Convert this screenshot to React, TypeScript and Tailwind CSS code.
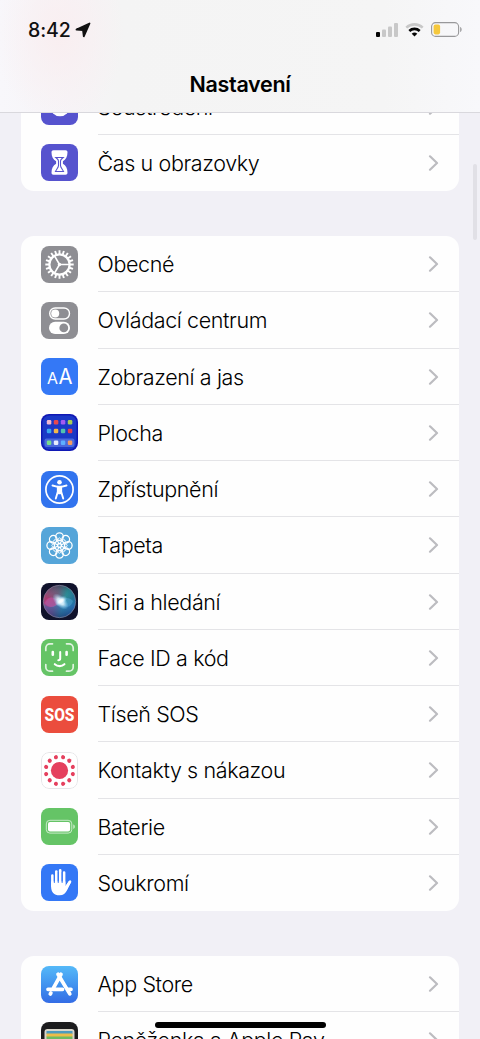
import type { ReactNode } from "react";

type Item = {
  label: string;
  icon: ReactNode;
  bg: string;
};

const ring = (n: number) => Array.from({ length: n }, (_, i) => (i * 360) / n);

function Glyph({ children }: { children: ReactNode }) {
  return (
    <svg viewBox="0 0 37 37" className="block size-full" fill="none" stroke="none">
      {children}
    </svg>
  );
}

function FocusIcon() {
  return (
    <Glyph>
      <circle cx="19" cy="18.5" r="9.8" fill="#fff" />
      <circle cx="20" cy="16.5" r="7.200" fill="#5653ce" />
    </Glyph>
  );
}

function HourglassIcon() {
  return (
    <Glyph>
      <path
        d="M12.500 6.200h12c1.300 0 2 .8 2 2 0 4.500-1.600 7.200-4.600 9.100v2.400c3 1.900 4.600 4.600 4.600 9.100 0 1.200-.7 2-2 2h-12c-1.300 0-2-.8-2-2 0-4.500 1.600-7.200 4.600-9.100v-2.400c-3-1.900-4.600-4.600-4.600-9.100 0-1.200.7-2 2-2z"
        fill="#fff"
      />
      <path
        d="M14.800 13.500c1.400 1.200 2.700 2 2.700 3.500v4.500c0 2-1.800 3.500-3 6h8c-1.200-2.500-3-4-3-6V17c0-1.500 1.300-2.300 2.700-3.500z"
        stroke="#5653ce"
        strokeWidth="1.100"
      />
    </Glyph>
  );
}

function GearIcon() {
  return (
    <Glyph>
      <g stroke="#fff">
        {ring(20).map((a) => (
          <path key={a} d="M18.500 4.300v3.700" strokeWidth="1.900" transform={`rotate(${a} 18.5 18.5)`} />
        ))}
        <circle cx="18.5" cy="18.5" r="10.100" strokeWidth="2.200" />
        <path d="M18.500 18.500h10M18.500 18.500l-5-8.700M18.500 18.500l-5 8.700" strokeWidth="1.600" />
      </g>
      <circle cx="18.5" cy="18.5" r="1.700" fill="#fff" />
    </Glyph>
  );
}

function TogglesIcon() {
  return (
    <Glyph>
      <rect x="8.700" y="6" width="19.800" height="11" rx="5.500" stroke="#fff" strokeWidth="1.400" />
      <circle cx="14.200" cy="11.500" r="4" fill="#fff" />
      <rect x="8" y="19.800" width="21" height="12.200" rx="6.100" fill="#fff" />
      <circle cx="22.800" cy="25.900" r="4.400" fill="#8e8e93" />
    </Glyph>
  );
}

function TextSizeIcon() {
  return (
    <Glyph>
      <g fill="#fff" fontFamily="Inter, sans-serif">
        <text x="6" y="26" fontSize="16" fontWeight="400" textLength="11" lengthAdjust="spacingAndGlyphs">
          A
        </text>
        <text x="17.500" y="26" fontSize="21.500" fontWeight="400" textLength="14" lengthAdjust="spacingAndGlyphs">
          A
        </text>
      </g>
    </Glyph>
  );
}

const appDots = [
  ["#f0b8d0", "#e5484f", "#a45af0", "#a9ce55"],
  ["#39a5ee", "#f3b649", "#52c3ae", "#e33d4c"],
  ["#78dc8c", "#e8ecff", "#5daeff", "#f49b62"],
];

function HomeScreenIcon() {
  return (
    <Glyph>
      <rect x="1.500" y="1.500" width="34" height="34" rx="7" fill="#1b38c6" />
      <rect x="3.500" y="24.500" width="30" height="8.500" rx="2" fill="#4a68dc" />
      {appDots.map((row, y) =>
        row.map((color, x) => (
          <rect
            key={color}
            x={5.800 + x * 7}
            y={[6, 14.800, 26.500][y]}
            width="4.500"
            height="4.500"
            rx="1.200"
            fill={color}
          />
        ))
      )}
    </Glyph>
  );
}

function AccessibilityIcon() {
  return (
    <Glyph>
      <circle cx="18.5" cy="18.5" r="13.600" stroke="#fff" strokeWidth="1.700" />
      <circle cx="18.5" cy="11.200" r="2.300" fill="#fff" />
      <path
        d="M11.500 14.500l5.300 1.300v5l-2 6.800M25.500 14.500l-5.300 1.300v5l2 6.800"
        stroke="#fff"
        strokeWidth="1.900"
        strokeLinecap="round"
        strokeLinejoin="round"
      />
      <path d="M16 14.800h5v6.400l-1.200 2h-2.600l-1.200-2z" fill="#fff" />
    </Glyph>
  );
}

function FlowerIcon() {
  return (
    <Glyph>
      <g stroke="#fff" strokeWidth="1.300">
        {ring(8).map((a) => (
          <circle key={a} cx="18.500" cy="9.700" r="3.800" transform={`rotate(${a} 18.5 18.5)`} />
        ))}
        {ring(8).map((a) => (
          <ellipse key={a} cx="18.500" cy="13.800" rx="1.700" ry="3" strokeWidth=".9" transform={`rotate(${a} 18.5 18.5)`} />
        ))}
        <circle cx="18.5" cy="18.5" r="2" />
      </g>
    </Glyph>
  );
}

function SiriIcon() {
  return (
    <Glyph>
      <defs>
        <linearGradient id="siri-orb" x1="0" y1="0.300" x2="1" y2="0.600">
          <stop offset="0" stopColor="#c32461" />
          <stop offset=".4" stopColor="#85486f" />
          <stop offset=".65" stopColor="#2d8490" />
          <stop offset="1" stopColor="#1b5a94" />
        </linearGradient>
        <linearGradient id="siri-shade" x1="0" y1="0" x2="0" y2="1">
          <stop offset="0" stopColor="#17505a" stopOpacity=".6" />
          <stop offset=".4" stopColor="#37bfc0" stopOpacity=".1" />
          <stop offset=".65" stopColor="#2d78c8" stopOpacity=".5" />
          <stop offset="1" stopColor="#1c2a70" stopOpacity=".6" />
        </linearGradient>
        <radialGradient id="siri-glow">
          <stop offset="0" stopColor="#fff" />
          <stop offset=".35" stopColor="#f0faff" stopOpacity=".9" />
          <stop offset="1" stopColor="#86d5ff" stopOpacity="0" />
        </radialGradient>
      </defs>
      <circle cx="18.5" cy="18.5" r="16.200" fill="url(#siri-orb)" />
      <circle cx="18.5" cy="18.5" r="16.200" fill="url(#siri-shade)" stroke="#8b87a2" strokeOpacity=".6" />
      <path d="M4 20c4-8 10-6 15-1 4-5 9-5 13-1-2 7-8 8-13 1-5 6-11 7-15 1z" fill="#5eaee4" fillOpacity=".4" />
      <path d="M3 20c4-8 9-6 16-1-6 6-12 7-16 1z" fill="#e52e83" fillOpacity=".5" />
      <ellipse cx="19.500" cy="18.500" rx="10" ry="5.500" fill="url(#siri-glow)" transform="rotate(45 19.500 18.500)" />
      <ellipse cx="20" cy="18" rx="7" ry="4" fill="url(#siri-glow)" transform="rotate(-35 20 18)" />
    </Glyph>
  );
}

function FaceIcon() {
  return (
    <Glyph>
      <g stroke="#fff" strokeLinecap="round">
        <path
          d="M4.800 11.500V9a4.200 4.200 0 0 1 4.200-4.200h2.500M25.500 4.800H28A4.200 4.200 0 0 1 32.200 9v2.500M32.200 25.500V28a4.200 4.200 0 0 1-4.200 4.200h-2.500M11.500 32.200H9A4.200 4.200 0 0 1 4.800 28v-2.500"
          strokeWidth="1.700"
          strokeOpacity=".8"
        />
        <path d="M11.800 13v2.800M25.600 13v2.800" strokeWidth="2.600" />
        <path d="M19.200 13v6.500c0 1.200-.6 1.700-1.900 1.700" strokeWidth="2" />
        <path d="M13.800 25.200c2.700 2.500 6.900 2.500 9.600 0" strokeWidth="2.100" />
      </g>
    </Glyph>
  );
}

function SosIcon() {
  return (
    <Glyph>
      <text
        x="18.500"
        y="25.200"
        fill="#fff"
        fontFamily="Roboto, sans-serif"
        fontSize="19"
        fontWeight="800"
        textAnchor="middle"
        textLength="30"
        lengthAdjust="spacingAndGlyphs"
      >
        SOS
      </text>
    </Glyph>
  );
}

function ExposureIcon() {
  return (
    <Glyph>
      <rect x=".5" y=".5" width="36" height="36" rx="7.500" stroke="#e6e6e8" />
      <circle cx="18.500" cy="18.500" r="8.600" fill="#e5405e" />
      {ring(12).map((a) => (
        <circle key={a} cx="18.500" cy="4.700" r="2.050" fill="#e5405e" transform={`rotate(${a + 15} 18.5 18.5)`} />
      ))}
    </Glyph>
  );
}

function BatteryIcon() {
  return (
    <Glyph>
      <rect x="5.300" y="12.300" width="25.500" height="12.800" rx="3.600" stroke="#fff" strokeOpacity=".65" />
      <rect x="7" y="14" width="22.100" height="9.400" rx="2" fill="#fff" />
      <path d="M32.300 16.500c2 .6 2 3.800 0 4.400z" fill="#fff" fillOpacity=".7" />
    </Glyph>
  );
}

function HandIcon() {
  return (
    <Glyph>
      <g stroke="#fff" strokeWidth="2.600" strokeLinecap="round">
        <path d="M11.400 11.500V22M15.300 7.500V20M19.200 6.200V20M23.100 8.500V21M29 17.800l-4.600 7.500" />
      </g>
      <path
        d="M10.100 17.500h14.300v4.500l3.500-5c1-1 2.300-.5 2.300.6l-4 8.400c-1.800 3.500-3.800 5.300-7.700 5.300-5.600 0-8.400-3.600-8.400-8.600z"
        fill="#fff"
      />
      <path d="M13.350 10v9M17.250 8v11M21.150 8v11" stroke="#3478f6" strokeWidth=".9" />
    </Glyph>
  );
}

function AppStoreIcon() {
  return (
    <Glyph>
      <g stroke="#fff" strokeWidth="3.700" strokeLinecap="round">
        <path d="M20 8.300l-7.500 13.500M17 8.300l11.800 19.600M9.900 27l-.6 1" />
        <path d="M7 23.300h14.500M27.500 23.300h2.500" />
      </g>
    </Glyph>
  );
}

function WalletIcon() {
  return (
    <Glyph>
      <rect x="3.500" y="7" width="30" height="28" rx="3" fill="#d8d5cb" />
      <path d="M5.500 9h26v3h-26z" fill="#4b9cc0" />
      <path d="M5.500 11.500h26V15h-26z" fill="#edbc48" />
      <path d="M5.500 14.500h26V18h-26z" fill="#6dbb62" />
      <path d="M5.500 17.500h26v8h-26z" fill="#e3785a" />
    </Glyph>
  );
}

const groups: Item[][] = [
  [
    { label: "Soustředění", icon: <FocusIcon />, bg: "bg-[#5653ce]" },
    { label: "Čas u obrazovky", icon: <HourglassIcon />, bg: "bg-[#5653ce]" },
  ],
  [
    { label: "Obecné", icon: <GearIcon />, bg: "bg-[#8e8e93]" },
    { label: "Ovládací centrum", icon: <TogglesIcon />, bg: "bg-[#8e8e93]" },
    { label: "Zobrazení a jas", icon: <TextSizeIcon />, bg: "bg-[#3478f6]" },
    { label: "Plocha", icon: <HomeScreenIcon />, bg: "bg-[#1018b4]" },
    { label: "Zpřístupnění", icon: <AccessibilityIcon />, bg: "bg-[#3173ee]" },
    { label: "Tapeta", icon: <FlowerIcon />, bg: "bg-[#55a5d9]" },
    { label: "Siri a hledání", icon: <SiriIcon />, bg: "bg-[#10122b]" },
    { label: "Face ID a kód", icon: <FaceIcon />, bg: "bg-[#65c466]" },
    { label: "Tíseň SOS", icon: <SosIcon />, bg: "bg-[#eb4d3d]" },
    { label: "Kontakty s nákazou", icon: <ExposureIcon />, bg: "bg-white" },
    { label: "Baterie", icon: <BatteryIcon />, bg: "bg-[#65c466]" },
    { label: "Soukromí", icon: <HandIcon />, bg: "bg-[#3478f6]" },
  ],
  [
    { label: "App Store", icon: <AppStoreIcon />, bg: "bg-linear-to-b from-[#55b9f8] to-[#346ce5]" },
    { label: "Peněženka a Apple Pay", icon: <WalletIcon />, bg: "bg-[#1c1c1e]" },
  ],
];

function Row({ item, last }: { item: Item; last: boolean }) {
  return (
    <li className="flex h-[56.25px] items-center pl-5">
      <div className={`size-[37px] shrink-0 overflow-hidden rounded-[8px] ${item.bg}`}>{item.icon}</div>
      <div
        className={`ml-[19.5px] flex h-full flex-1 items-center justify-between border-b pr-5 ${
          last ? "border-transparent" : "border-[#e4e4e7]"
        }`}
      >
        <span className="whitespace-nowrap pt-px text-[21.5px] font-[350] leading-7 tracking-[-0.38px] text-black">
          {item.label}
        </span>
        <svg viewBox="0 0 11 16" className="mt-px h-4 w-[11px]" fill="none">
          <path
            d="M2 1.300L9 8l-7 6.700"
            stroke="#bcbcc0"
            strokeWidth="2.200"
            strokeLinecap="round"
            strokeLinejoin="round"
          />
        </svg>
      </div>
    </li>
  );
}

function StatusBar() {
  return (
    <div className="flex h-[59px] items-center justify-between pl-7 pr-[18px]">
      <div className="flex items-center gap-1">
        <span className="text-[19.5px] font-medium leading-6 tracking-[-0.1px] text-[#111]">8:42</span>
        <svg viewBox="0 0 16 16" className="size-4">
          <path d="M14.500 1.500L8.800 14.300 8 8.200 1.500 7.500z" fill="#111" stroke="#111" strokeWidth="1.800" strokeLinejoin="round" />
        </svg>
      </div>
      <div className="flex items-center gap-[7px]">
        <svg viewBox="0 0 22 14" className="h-[14px] w-[22px]">
          <rect x="0" y="9" width="4" height="5" rx="1" fill="#050505" />
          <rect x="6" y="6.500" width="4" height="7.500" rx="1" fill="#c8c8c8" />
          <rect x="12" y="3.500" width="4" height="10.500" rx="1" fill="#c8c8c8" />
          <rect x="18" y="0" width="4" height="14" rx="1" fill="#c8c8c8" />
        </svg>
        <svg viewBox="0 0 19 14" className="h-[14px] w-[19px]" fill="none">
          <path d="M1.300 4.600a12 12 0 0 1 16.400 0" stroke="#c8c8c8" strokeWidth="2.600" />
          <path d="M4.300 8a7.500 7.500 0 0 1 10.400 0" stroke="#050505" strokeWidth="2.600" />
          <path d="M6.700 10.800a4 4 0 0 1 5.600 0L9.500 13.600z" fill="#050505" />
        </svg>
        <svg viewBox="0 0 31 15" className="h-[15px] w-[31px]" fill="none">
          <rect x=".6" y=".6" width="27" height="13.800" rx="4" stroke="#98989a" strokeWidth="1.100" />
          <rect x="2.600" y="2.600" width="6.500" height="9.800" rx="1.800" fill="#f5c83d" />
          <path d="M29.200 5c1.900.6 1.900 4.400 0 5z" fill="#98989a" />
        </svg>
      </div>
    </div>
  );
}

export default function App() {
  return (
    <div className="relative flex h-[1039px] w-[480px] flex-col overflow-hidden bg-[#f1f0f6] font-['Inter','Liberation_Sans',sans-serif]">
      <header className="h-[113px] shrink-0 border-b border-[#d9d8dd] bg-[radial-gradient(ellipse_65px_90px_at_60px_35px,#f9eef0_0%,transparent_100%),linear-gradient(90deg,#f8f7fb_0%,#f6f4f7_15%,#f4f4f4_25%,#f5f5f5_80%,#f8f8fb_100%)]">
        <StatusBar />
        <h1 className="text-center text-[21.5px] font-semibold leading-[50px] tracking-[-0.3px] text-black">
          Nastavení
        </h1>
      </header>
      <main className="flex-1 overflow-hidden">
        <div className="-mt-[34.400px] flex flex-col gap-[45px] px-[21px]">
          {groups.map((items) => (
            <ul key={items[0].label} className="rounded-[13px] bg-[#fefefe]">
              {items.map((item, i) => (
                <Row key={item.label} item={item} last={i === items.length - 1} />
              ))}
            </ul>
          ))}
        </div>
      </main>
      <div className="absolute right-[3px] top-[164px] h-[76px] w-1 rounded-full bg-[#e1e0e6]" />
      <div className="absolute left-[155px] top-[1022px] h-[6px] w-[171px] rounded-full bg-black" />
    </div>
  );
}
